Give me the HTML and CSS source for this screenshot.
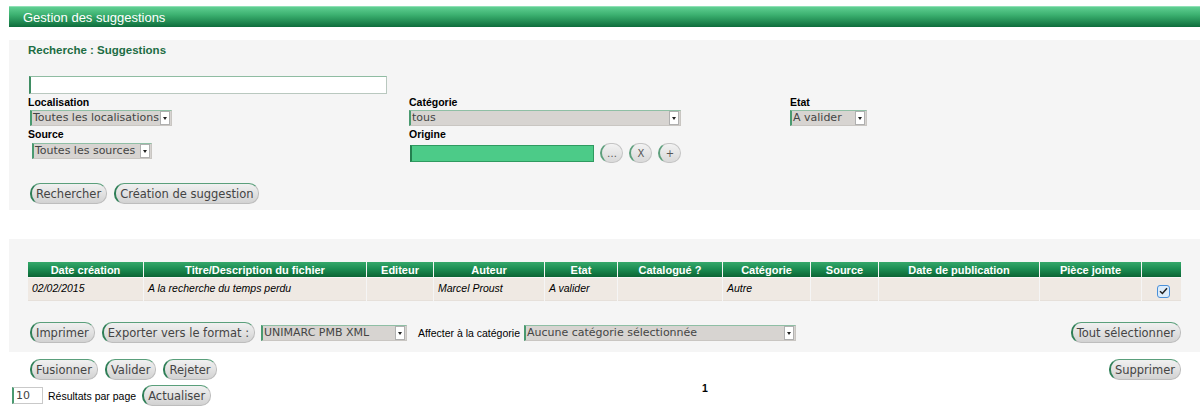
FILE: index.html
```html
<!DOCTYPE html>
<html lang="fr">
<head>
<meta charset="utf-8">
<title>Gestion des suggestions</title>
<link rel="stylesheet" href="styles.css">
</head>
<body>
<div class="page">
  <div class="titlebar">Gestion des suggestions</div>

  <div class="panel search">
    <h3 class="ptitle">Recherche : Suggestions</h3>
    <div class="textin"></div>
    <div class="fields">
      <div class="col">
        <label class="lbl">Localisation</label>
        <span class="sel w-loc"><span class="val">Toutes les localisations</span><span class="arr"></span></span>
        <label class="lbl lbl2">Source</label>
        <span class="sel w-src"><span class="val">Toutes les sources</span><span class="arr"></span></span>
      </div>
      <div class="col">
        <label class="lbl">Catégorie</label>
        <span class="sel w-cat"><span class="val">tous</span><span class="arr"></span></span>
        <label class="lbl lbl2">Origine</label>
        <div class="origine">
          <span class="greenin"></span>
          <span class="rbtn">…</span>
          <span class="rbtn">X</span>
          <span class="rbtn">+</span>
        </div>
      </div>
      <div class="col">
        <label class="lbl">Etat</label>
        <span class="sel w-etat"><span class="val">A valider</span><span class="arr"></span></span>
      </div>
    </div>
    <div class="btnrow">
      <span class="btn">Rechercher</span>
      <span class="btn">Création de suggestion</span>
    </div>
  </div>

  <div class="panel results">
    <table class="grid">
      <colgroup>
        <col style="width:115px"><col style="width:222px"><col style="width:66px"><col style="width:110px"><col style="width:72px"><col style="width:104px"><col style="width:87px"><col style="width:67px"><col style="width:160px"><col style="width:101px"><col style="width:39px">
      </colgroup>
      <thead>
        <tr><th>Date création</th><th>Titre/Description du fichier</th><th>Editeur</th><th>Auteur</th><th>Etat</th><th>Catalogué ?</th><th>Catégorie</th><th>Source</th><th>Date de publication</th><th>Pièce jointe</th><th></th></tr>
      </thead>
      <tbody>
        <tr>
          <td>02/02/2015</td><td>A la recherche du temps perdu</td><td></td><td>Marcel Proust</td><td>A valider</td><td></td><td>Autre</td><td></td><td></td><td></td>
          <td class="chk"><span class="cbox"><svg width="9" height="8" viewBox="0 0 9 8"><path d="M1 4.2 L3.4 6.5 L8 1.2" fill="none" stroke="#222" stroke-width="1.5"/></svg></span></td>
        </tr>
      </tbody>
    </table>
    <div class="actions">
      <span class="btn">Imprimer</span>
      <span class="btn">Exporter vers le format :</span>
      <span class="sel w-fmt"><span class="val">UNIMARC PMB XML</span><span class="arr"></span></span>
      <span class="txt aff">Affecter à la catégorie</span>
      <span class="sel w-aff"><span class="val">Aucune catégorie sélectionnée</span><span class="arr"></span></span>
      <span class="spacer"></span>
      <span class="btn">Tout sélectionner</span>
    </div>
  </div>

  <div class="actions2">
    <span class="btn">Fusionner</span>
    <span class="btn">Valider</span>
    <span class="btn">Rejeter</span>
    <span class="spacer"></span>
    <span class="btn">Supprimer</span>
  </div>

  <div class="pager">
    <div class="perpage">
      <span class="numin">10</span>
      <span class="txt">Résultats par page</span>
      <span class="btn">Actualiser</span>
    </div>
    <div class="pages">1</div>
  </div>
</div>
</body>
</html>
```
FILE: styles.css
```css
* { box-sizing: border-box; }
html, body { margin: 0; padding: 0; background: #fff; }
body { font-family: "Liberation Sans", Arial, sans-serif; font-size: 10.5px; color: #000; }
.page { padding: 6px 0 0 9px; }

.titlebar {
  height: 21px;
  line-height: 21px;
  padding-left: 14px;
  color: #fff;
  font-size: 13px;
  background: linear-gradient(to bottom, #5fcf92 0%, #3bb06f 40%, #0e6d3c 100%);
  border-top: 1px solid #8fe0b5;
}

.panel { background: #f5f5f5; }
.search { margin-top: 13px; height: 170px; padding: 2px 19px 0 19px; }
.ptitle { margin: 0; font-size: 11.5px; font-weight: bold; color: #1d6d44; line-height: 16px; height: 16px; }
.textin {
  margin-top: 18px; margin-left: 1px;
  width: 358px; height: 18px;
  background: #fff;
  border: 1px solid #b9c8bf;
  border-left: 2px solid #3f8d63;
  border-top-color: #8fbca2;
}

.fields { display: grid; grid-template-columns: 381px 381px 381px; }
.col { display: flex; flex-direction: column; align-items: flex-start; }
.lbl { display: block; font-weight: bold; font-size: 10.5px; line-height: 12px; margin-top: 2px; height: 12px; }
.lbl2 { margin-top: 2px; }

.sel {
  display: inline-flex; align-items: center;
  height: 16px; margin-top: 2px; margin-left: 2px;
  background: #d7d4d1;
  border: 1px solid #c9c6c2;
  border-left: 2px solid #4a9a70;
  border-top-color: #8fbfa5;
  font-family: "DejaVu Sans", sans-serif; font-size: 11px; color: #444;
  position: relative;
}
.sel .val { flex: 1; padding-left: 1px; white-space: nowrap; line-height: 14px; }
.sel .arr {
  width: 10px; height: 14px; margin-right: 1px;
  background: #fff; border: 1px solid #b0b0b0;
  position: relative;
}
.sel .arr::after {
  content: ""; position: absolute; left: 2px; top: 5px;
  border-left: 2.5px solid transparent; border-right: 2.5px solid transparent; border-top: 3px solid #222;
}
.w-loc { width: 142px; }
.w-src { width: 120px; margin-left: 4px; margin-top: 3px; }
.w-cat { width: 272px; margin-left: 0; }
.w-etat { width: 77px; margin-left: 0; }
.w-fmt { width: 146px; margin: 0; }
.w-aff { width: 272px; margin: 0; }

.origine { display: flex; align-items: center; gap: 6px; margin-top: 3px; margin-left: 1px; }
.greenin {
  width: 184px; height: 17px;
  background: #4ccb88;
  border: 1px solid #2f9a60;
  border-left: 2px solid #24804f;
}
.rbtn {
  width: 23px; height: 20px; border-radius: 10px;
  display: flex; align-items: center; justify-content: center;
  font-family: "DejaVu Sans", sans-serif; font-size: 10px; color: #555;
  background: linear-gradient(to bottom, #f2f2f2, #d9d9d9);
  border: 1px solid #c4c4c4;
  border-left: 2px solid #5d9f7c;
}

.btn {
  display: inline-flex; align-items: center;
  height: 21px; padding: 0 5px 0 4px;
  border-radius: 10px;
  font-family: "DejaVu Sans", sans-serif; font-size: 11.5px; color: #444;
  background: linear-gradient(to bottom, #f0f0f0 0%, #e2e2e2 50%, #d2d2d2 100%);
  border: 1px solid #bdbdbd;
  border-left: 2px solid #2f7f57;
  border-top-color: #5a9f7b;
  white-space: nowrap;
  flex-shrink: 0;
}

.btnrow { display: flex; gap: 7px; margin-top: 20px; margin-left: 2px; }

.results { margin-top: 29px; padding: 23px 19px 9px 19px; }
.grid { border-collapse: separate; border-spacing: 1px 0; margin-left: -1px; table-layout: fixed; width: 1155px; }
.grid th {
  height: 16px; padding: 0;
  font-size: 11px; font-weight: bold; color: #fff; text-align: center;
  background: linear-gradient(to bottom, #35a86a 0%, #1a8a50 50%, #0b6534 100%);
  border-bottom: 1px solid #f5f5f5;
}
.grid td {
  height: 23px; padding: 0 4px 2px 4px;
  font-style: italic; font-size: 10.5px;
  background: #efe9e3;
  border-bottom: 1px solid #e6e0da;
}
.grid td.chk { text-align: center; padding: 4px 0 0 4px; }
.cbox {
  display: inline-flex; align-items: center; justify-content: center;
  width: 13px; height: 13px; border-radius: 3px;
  border: 1px solid #4a90d9; background: #dcecfa;
}

.actions { display: flex; align-items: center; gap: 7px; margin-top: 21px; margin-left: 2px; }
.actions .w-fmt { margin-left: -1px; }
.txt { font-size: 10.5px; white-space: nowrap; }
.aff { margin-left: 4px; margin-right: -3px; }
.spacer { flex: 1; }

.actions2 { display: flex; align-items: center; gap: 7px; padding: 7px 19px 0 21px; }

.pager { display: flex; align-items: center; margin-top: 5px; margin-left: 3px; }
.perpage { display: flex; align-items: center; gap: 5px; width: 198px; flex-shrink: 0; }
.numin {
  width: 31px; height: 17px; line-height: 15px; flex-shrink: 0;
  background: #fff; border: 1px solid #c9c9c9; border-left: 2px solid #4a9a70;
  font-family: "DejaVu Sans", sans-serif; font-size: 11px; color: #444; padding-left: 2px;
}
.perpage .btn { margin-left: 1px; }
.pages { flex: 1; text-align: center; font-weight: bold; font-size: 10.5px; align-self: flex-start; margin-top: -3px; }
```
